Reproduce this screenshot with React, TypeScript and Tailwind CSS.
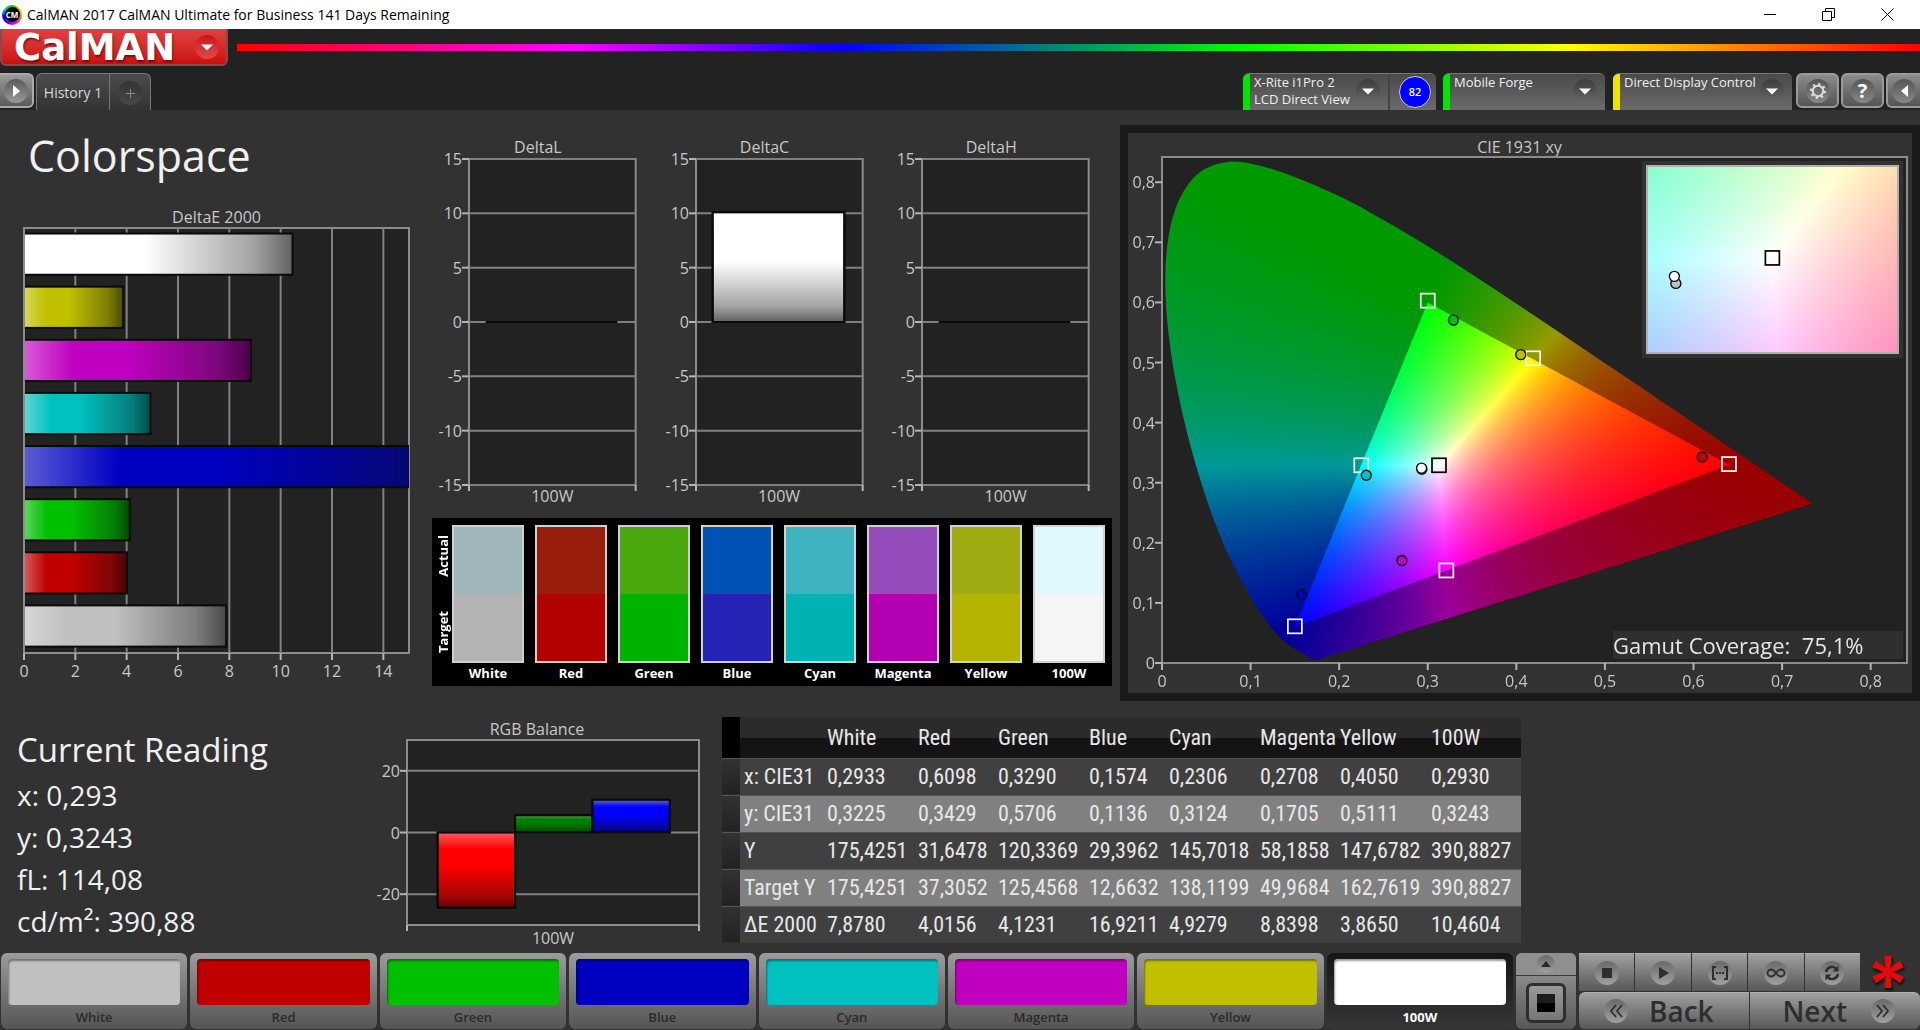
import { useLayoutEffect, useRef } from "react";
import type { ReactNode } from "react";

type Patch = {
  name: string;
  color: string;
  actual: string;
  target: string;
  deltaE: number;
};

const patches: Patch[] = [
  { name: "White", color: "#c0c0c0", actual: "#a2b5bb", target: "#b3b3b3", deltaE: 7.878 },
  { name: "Red", color: "#c00000", actual: "#9a1e0c", target: "#b30000", deltaE: 4.0156 },
  { name: "Green", color: "#00c000", actual: "#4ba90f", target: "#00b300", deltaE: 4.1231 },
  { name: "Blue", color: "#0000c0", actual: "#0053b4", target: "#2622b5", deltaE: 16.9211 },
  { name: "Cyan", color: "#00c0c0", actual: "#3eb3bf", target: "#00b3b3", deltaE: 4.9279 },
  { name: "Magenta", color: "#c000c0", actual: "#944dba", target: "#b300b3", deltaE: 8.8398 },
  { name: "Yellow", color: "#c0c000", actual: "#a0ab12", target: "#b3b300", deltaE: 3.865 },
  { name: "100W", color: "#ffffff", actual: "#dff9ff", target: "#f5f5f5", deltaE: 10.4604 },
];

const tableRows = [
  ["x: CIE31", "0,2933", "0,6098", "0,3290", "0,1574", "0,2306", "0,2708", "0,4050", "0,2930"],
  ["y: CIE31", "0,3225", "0,3429", "0,5706", "0,1136", "0,3124", "0,1705", "0,5111", "0,3243"],
  ["Y", "175,4251", "31,6478", "120,3369", "29,3962", "145,7018", "58,1858", "147,6782", "390,8827"],
  ["Target Y", "175,4251", "37,3052", "125,4568", "12,6632", "138,1199", "49,9684", "162,7619", "390,8827"],
  ["ΔE 2000", "7,8780", "4,0156", "4,1231", "16,9211", "4,9279", "8,8398", "3,8650", "10,4604"],
];

// Spectral locus, CIE 1931 2 degree observer
const locus = [
  [0.1741, 0.005], [0.1714, 0.0051], [0.1689, 0.0069], [0.1644, 0.0109], [0.1566, 0.0177],
  [0.144, 0.0297], [0.1355, 0.0399], [0.1241, 0.0578], [0.1096, 0.0868], [0.0913, 0.1327],
  [0.0687, 0.2007], [0.0454, 0.295], [0.0235, 0.4127], [0.0082, 0.5384], [0.0039, 0.6548],
  [0.0139, 0.7502], [0.0389, 0.812], [0.0743, 0.8338], [0.1142, 0.8262], [0.1547, 0.8059],
  [0.1929, 0.7816], [0.2296, 0.7543], [0.3016, 0.6923], [0.3731, 0.6245], [0.4441, 0.5547],
  [0.5125, 0.4866], [0.5752, 0.4242], [0.627, 0.3725], [0.6658, 0.334], [0.6915, 0.3083],
  [0.719, 0.2809], [0.7347, 0.2653],
];

const gamut = [[0.64, 0.33], [0.3, 0.6], [0.15, 0.06]];

const targets = [
  { x: 0.3, y: 0.603, stroke: "#fff" },
  { x: 0.419, y: 0.507, stroke: "#fff" },
  { x: 0.64, y: 0.331, stroke: "#fff" },
  { x: 0.225, y: 0.329, stroke: "#fff" },
  { x: 0.321, y: 0.154, stroke: "#fff" },
  { x: 0.15, y: 0.061, stroke: "#fff" },
  { x: 0.3127, y: 0.329, stroke: "#000" },
];

const readings = [
  { x: 0.2933, y: 0.3225, fill: "#c0c0c0" },
  { x: 0.6098, y: 0.3429, fill: "#c00000" },
  { x: 0.329, y: 0.5706, fill: "#00c000" },
  { x: 0.1574, y: 0.1136, fill: "#0000c0" },
  { x: 0.2306, y: 0.3124, fill: "#00c0c0" },
  { x: 0.2708, y: 0.1705, fill: "#c000c0" },
  { x: 0.405, y: 0.5131, fill: "#c0c000" },
  { x: 0.293, y: 0.3243, fill: "#fff" },
];

type Range = { x0: number; x1: number; y0: number; y1: number };

const fullRange: Range = { x0: 0, x1: 0.841, y0: 0, y1: 0.842 };
const insetRange: Range = { x0: 0.2877, x1: 0.3377, y0: 0.305, y1: 0.3522 };

function xyToRgb(x: number, y: number) {
  const X = x / y;
  const Z = (1 - x - y) / y;
  const rgb = [
    3.2406 * X - 1.5372 - 0.4986 * Z,
    -0.9689 * X + 1.8758 + 0.0415 * Z,
    0.0557 * X - 0.204 + 1.057 * Z,
  ].map((v) => Math.max(0, v));
  const max = Math.max(...rgb);
  return rgb.map((v) => (v / max) * 255);
}

function Chromaticity({ range, bounded }: { range: Range; bounded?: boolean }) {
  const ref = useRef<HTMLCanvasElement>(null);

  useLayoutEffect(() => {
    const canvas = ref.current;
    const ctx = canvas?.getContext("2d");
    if (!canvas || !ctx) return;
    const w = (canvas.width = canvas.clientWidth);
    const h = (canvas.height = canvas.clientHeight);
    const px = (x: number) => ((x - range.x0) / (range.x1 - range.x0)) * w;
    const py = (y: number) => ((range.y1 - y) / (range.y1 - range.y0)) * h;

    const layer = (gain: number) => {
      const off = document.createElement("canvas");
      off.width = w;
      off.height = h;
      const offCtx = off.getContext("2d")!;
      const img = offCtx.createImageData(w, h);
      for (let j = 0; j < h; j++) {
        const y = range.y1 - ((j + 0.5) / h) * (range.y1 - range.y0);
        for (let i = 0; i < w; i++) {
          const x = range.x0 + ((i + 0.5) / w) * (range.x1 - range.x0);
          const [r, g, b] = xyToRgb(x, y);
          img.data.set([r * gain, g * gain, b * gain, 255], (j * w + i) * 4);
        }
      }
      offCtx.putImageData(img, 0, 0);
      return off;
    };

    if (!bounded) {
      ctx.drawImage(layer(1), 0, 0);
      return;
    }

    ctx.save();
    ctx.beginPath();
    ctx.moveTo(px(locus[0][0]), py(locus[0][1]));
    for (let i = 0; i < locus.length - 1; i++) {
      const p0 = locus[Math.max(0, i - 1)];
      const p1 = locus[i];
      const p2 = locus[i + 1];
      const p3 = locus[Math.min(locus.length - 1, i + 2)];
      ctx.bezierCurveTo(
        px(p1[0] + (p2[0] - p0[0]) / 6),
        py(p1[1] + (p2[1] - p0[1]) / 6),
        px(p2[0] - (p3[0] - p1[0]) / 6),
        py(p2[1] - (p3[1] - p1[1]) / 6),
        px(p2[0]),
        py(p2[1])
      );
    }
    ctx.closePath();
    ctx.clip();
    ctx.drawImage(layer(0.6), 0, 0);
    ctx.restore();

    ctx.beginPath();
    gamut.forEach(([x, y]) => ctx.lineTo(px(x), py(y)));
    ctx.closePath();
    ctx.clip();
    ctx.drawImage(layer(1), 0, 0);
  }, [range, bounded]);

  return <canvas ref={ref} className="block h-full w-full" />;
}

function Markers({ range }: { range: Range }) {
  const left = (x: number) => `${((x - range.x0) / (range.x1 - range.x0)) * 100}%`;
  const top = (y: number) => `${((range.y1 - y) / (range.y1 - range.y0)) * 100}%`;
  const inside = (p: { x: number; y: number }) =>
    p.x > range.x0 && p.x < range.x1 && p.y > range.y0 && p.y < range.y1;
  return (
    <svg className="absolute inset-0 h-full w-full">
      {targets.filter(inside).map((t) => (
        <svg key={t.x} x={left(t.x)} y={top(t.y)} overflow="visible">
          <rect x="-7" y="-7" width="14" height="14" fill="none" stroke={t.stroke} strokeWidth="1.7" />
        </svg>
      ))}
      {readings.filter(inside).map((r) => (
        <circle key={r.x} cx={left(r.x)} cy={top(r.y)} r="5" fill={r.fill} stroke="#111" strokeWidth="1.4" />
      ))}
    </svg>
  );
}

function Defs() {
  return (
    <svg className="absolute h-0 w-0" aria-hidden="true">
      <defs>
        <linearGradient id="shade-x">
          <stop offset="0" stopColor="#fff" stopOpacity=".36" />
          <stop offset=".22" stopColor="#fff" stopOpacity="0" />
          <stop offset=".45" stopColor="#111" stopOpacity="0" />
          <stop offset=".85" stopColor="#111" stopOpacity=".38" />
          <stop offset="1" stopColor="#000" stopOpacity=".62" />
        </linearGradient>
        <linearGradient id="shade-y" x2="0" y2="1">
          <stop offset="0" stopColor="#fff" stopOpacity=".36" />
          <stop offset=".22" stopColor="#fff" stopOpacity="0" />
          <stop offset=".45" stopColor="#111" stopOpacity="0" />
          <stop offset=".85" stopColor="#111" stopOpacity=".38" />
          <stop offset="1" stopColor="#000" stopOpacity=".62" />
        </linearGradient>
      </defs>
    </svg>
  );
}

function DeltaEChart() {
  const max = 15;
  const bars = [...patches].reverse();
  return (
    <section>
      <h2 className="text-center text-[16px] leading-5 text-[#c8c8c8]">DeltaE 2000</h2>
      <svg className="mt-px block h-[425px] w-full overflow-visible">
        <rect width="100%" height="100%" fill="#222" stroke="#8c8c8c" strokeWidth="2" />
        {[0, 2, 4, 6, 8, 10, 12, 14].map((t) => (
          <g key={t}>
            <line x1={`${(t / max) * 100}%`} x2={`${(t / max) * 100}%`} y2="100%" stroke="#808080" strokeWidth="2" />
            <svg x={`${(t / max) * 100}%`} y="100%" overflow="visible">
              <line y2="7" stroke="#b4b4b4" strokeWidth="2" />
              <text y="24" textAnchor="middle" className="fill-[#c8c8c8] text-[16px]">
                {t}
              </text>
            </svg>
          </g>
        ))}
        <svg width="100%" height="100%">
          {bars.map((b, i) => (
            <g key={b.name}>
              <rect
                y={`${i * 12.5 + 1.3}%`} height="9.7%" width={`${(b.deltaE / max) * 100}%`}
                fill={b.color}
              />
              <rect
                y={`${i * 12.5 + 1.3}%`} height="9.7%" width={`${(b.deltaE / max) * 100}%`}
                fill="url(#shade-x)" stroke="#0a0a0a" strokeWidth="2"
              />
            </g>
          ))}
        </svg>
        <line y2="100%" stroke="#8c8c8c" strokeWidth="2" />
      </svg>
      <div className="h-[30px]" />
    </section>
  );
}

type Bar = { x: number; width: number; value: number; color: string };

function ColumnChart({
  ticks,
  limit,
  bars,
  plotClass,
}: {
  ticks: number[];
  limit: number;
  bars: Bar[];
  plotClass: string;
}) {
  const at = (v: number) => `${((limit - v) / (2 * limit)) * 100}%`;
  return (
    <svg className={plotClass}>
      <rect width="100%" height="100%" fill="#222" stroke="#8c8c8c" strokeWidth="2" />
      {ticks.map((t) => (
        <g key={t}>
          <line x2="100%" y1={at(t)} y2={at(t)} stroke="#808080" strokeWidth="2" />
          <line x1="-7" y1={at(t)} y2={at(t)} stroke="#b4b4b4" strokeWidth="2" />
          <text x="-7" y={at(t)} dy="6" textAnchor="end" className="fill-[#c8c8c8] text-[16px]">
            {t}
          </text>
        </g>
      ))}
      {bars.map((b) => (
        <g key={b.x} stroke="#0a0a0a" strokeWidth="2">
          <rect
            x={`${b.x}%`} width={`${b.width}%`} y={at(Math.max(0, b.value))}
            height={`${(Math.abs(b.value) / (2 * limit)) * 100}%`} fill={b.color}
          />
          <rect
            x={`${b.x}%`} width={`${b.width}%`} y={at(Math.max(0, b.value))}
            height={`${(Math.abs(b.value) / (2 * limit)) * 100}%`} fill="url(#shade-y)"
          />
          {b.value === 0 && <line x1={`${b.x}%`} x2={`${b.x + b.width}%`} y1="50%" y2="50%" />}
        </g>
      ))}
      <svg y="100%" overflow="visible">
        <line y2="6" stroke="#b4b4b4" strokeWidth="2" />
      </svg>
      <svg x="100%" y="100%" overflow="visible">
        <line y2="6" stroke="#b4b4b4" strokeWidth="2" />
      </svg>
    </svg>
  );
}

function DeltaChart({ title, value }: { title: string; value: number }) {
  return (
    <section className="flex-1 pr-[23px]">
      <h2 className="pl-2 text-center text-[16px] leading-5 text-[#c8c8c8]">{title}</h2>
      <div className="pl-[37px]">
        <ColumnChart
          ticks={[15, 10, 5, 0, -5, -10, -15]}
          limit={15}
          bars={[{ x: 10, width: 79, value, color: "#fff" }]}
          plotClass="mt-0.5 block h-[326px] w-full overflow-visible"
        />
        <p className="pt-px text-center text-[16px] leading-5 text-[#c8c8c8]">100W</p>
      </div>
    </section>
  );
}

function SwatchPanel() {
  return (
    <section className="mt-3 flex bg-black pt-[7px] pr-[7px] pb-[3px] pl-[3px] font-bold text-white">
      <div className="flex h-[138px] w-[17px] flex-col justify-between py-2.5 text-[13px] leading-4">
        <span className="rotate-180 text-center [writing-mode:vertical-rl]">Actual</span>
        <span className="rotate-180 text-center [writing-mode:vertical-rl]">Target</span>
      </div>
      <div className="grid flex-1 grid-cols-8 gap-[11px]">
        {patches.map((p) => (
          <figure key={p.name} className="min-w-0">
            <div className="flex h-[138px] flex-col border-2 border-[#d0d0d0]">
              <div className="flex-1" style={{ background: p.actual }} />
              <div className="flex-1" style={{ background: p.target }} />
            </div>
            <figcaption className="text-center text-[13px] leading-5">{p.name}</figcaption>
          </figure>
        ))}
      </div>
    </section>
  );
}

function CiePanel() {
  return (
    <section className="mt-[15px] ml-2 border-8 border-[#1a1a1a] bg-[#323232] pt-1 pr-[5px] pl-[34px]">
      <h2 className="pr-[30px] text-center text-[16px] leading-5 text-[#c8c8c8]">CIE 1931 xy</h2>
      <div className="relative h-[506px] bg-[#222]">
        <Chromaticity range={fullRange} bounded />
        <svg className="absolute inset-0 h-full w-full overflow-visible">
          <rect width="100%" height="100%" fill="none" stroke="#8c8c8c" strokeWidth="2" />
          {["0", "0,1", "0,2", "0,3", "0,4", "0,5", "0,6", "0,7", "0,8"].map((t, i) => (
            <g key={t}>
              <svg x={`${(i / 8.41) * 100}%`} y="100%" overflow="visible">
                <line y2="7" stroke="#b4b4b4" strokeWidth="2" />
                <text y="24" textAnchor="middle" className="fill-[#c8c8c8] text-[16px]">
                  {t}
                </text>
              </svg>
              <svg y={`${(1 - i / 8.42) * 100}%`} overflow="visible">
                <line x1="-7" stroke="#b4b4b4" strokeWidth="2" />
                <text x="-7" y="6" textAnchor="end" className="fill-[#c8c8c8] text-[16px]">
                  {t}
                </text>
              </svg>
            </g>
          ))}
        </svg>
        <Markers range={fullRange} />
        <div className="absolute top-1 right-1 h-[197px] w-[35%] border-4 border-[#323232]">
          <div className="relative h-full border-2 border-[#b0b0b0]">
            <Chromaticity range={insetRange} />
            <Markers range={insetRange} />
          </div>
        </div>
        <p className="absolute right-1 bottom-1 w-[290px] bg-[#2f2f2f] text-[22px] leading-7 whitespace-pre text-[#e6e6e6]">
          Gamut Coverage:{"  "}75,1%
        </p>
      </div>
      <div className="h-[30px]" />
    </section>
  );
}

function CurrentReading() {
  return (
    <section className="pt-[29px] pl-[17px] text-[#f0f0f0]">
      <h2 className="text-[33px] leading-10">Current Reading</h2>
      <div className="mt-1 text-[28px] leading-[42px]">
        <p>x: 0,293</p>
        <p>y: 0,3243</p>
        <p>fL: 114,08</p>
        <p>cd/m²: 390,88</p>
      </div>
    </section>
  );
}

function ReadingsTable() {
  return (
    <table className="mt-4 w-2/3 table-fixed border-collapse text-left font-['Roboto_Condensed','Open_Sans',sans-serif] text-[22px] text-[#e8e8e8]">
      <thead>
        <tr className="h-[41px] bg-linear-to-b from-[#2b2b2b] from-50% to-[#141414] to-50%">
          <th className="w-[18px] bg-black" />
          <th className="w-[83px]" />
          {patches.map((p, i) => (
            <th
              key={p.name}
              className={`${i === patches.length - 1 ? "w-auto" : i % 2 ? "w-[80px]" : "w-[91px]"} pl-1 font-normal`}
            >
              {p.name}
            </th>
          ))}
        </tr>
      </thead>
      <tbody>
        {tableRows.map((row) => (
          <tr key={row[0]} className="h-[37px] border-t border-[#555] bg-[#404040] even:bg-[#808080]">
            <td className="bg-linear-to-b from-[#323232] to-[#222]" />
            {row.map((cell, i) => (
              <td key={i} className="pl-1 whitespace-nowrap">
                {cell}
              </td>
            ))}
          </tr>
        ))}
      </tbody>
    </table>
  );
}

function RoundIcon({ children, className = "" }: { children?: ReactNode; className?: string }) {
  return (
    <span className={`grid shrink-0 place-items-center rounded-full ${className}`}>
      {children}
    </span>
  );
}

function DownArrow() {
  return (
    <svg width="12" height="8" viewBox="0 0 12 8" fill="#fff">
      <path d="M0 1.500h12L6 7.500z" />
    </svg>
  );
}

function DeviceMenu({ lines, accent, className, children }: {
  lines: string[];
  accent: string;
  className: string;
  children?: ReactNode;
}) {
  return (
    <div className={`flex h-[37px] overflow-hidden rounded-t-md border-t border-[#777] bg-linear-to-b from-[#4a4a4a] to-[#6b6b6b] ${className}`}>
      <span className={`w-[7px] shrink-0 ${accent}`} />
      <button type="button" className="flex min-w-0 flex-1 items-start pl-1 text-left">
        <span className="flex-1 text-[13px] leading-[17px] whitespace-nowrap text-[#f0f0f0]">
          {lines.map((l) => (
            <span key={l} className="block">
              {l}
            </span>
          ))}
        </span>
        <RoundIcon className="mt-[5px] mr-2 h-6 w-6 bg-linear-to-b from-[#3c3c3c] to-[#686868]">
          <DownArrow />
        </RoundIcon>
      </button>
      {children}
    </div>
  );
}

const toolButton =
  "grid h-[35px] w-[43px] place-items-center rounded-md border-2 border-[#9a9a9a] bg-linear-to-b from-[#8c8c8c] to-[#555]";

function Header() {
  return (
    <header className="bg-[#222]">
      <div className="flex items-start">
        <button
          type="button"
          aria-label="CalMAN menu"
          className="flex h-[37px] w-[228px] items-center rounded-b-md border-2 border-t-0 border-[#8a4a4a] bg-linear-to-b from-[#e04040] to-[#cc0d0d] pl-3"
        >
          <span className="pt-0.5 font-['DejaVu_Sans','Open_Sans',sans-serif] text-[37px] leading-[34px] font-bold text-white [text-shadow:1px_2px_2px_#0007]">CalMAN</span>
          <RoundIcon className="mr-[7px] ml-auto h-6 w-6 bg-linear-to-b from-[#c8101c] to-[#e04848]">
            <DownArrow />
          </RoundIcon>
        </button>
        <div className="mt-[15px] ml-[9px] h-[7px] flex-1 bg-[linear-gradient(90deg,#f00,#f0f_20%,#00f_36%,#0f0_60%,#ff0_79%,#f00)]" />
      </div>
      <div className="flex items-start pt-[7px]">
        <button
          type="button"
          aria-label="Expand left panel"
          className="grid h-[35px] w-[34px] place-items-center rounded-r-md border-2 border-l-0 border-[#aaa] bg-linear-to-b from-[#999] to-[#5c5c5c]"
        >
          <RoundIcon className="h-6 w-6 bg-linear-to-b from-[#5a5a5a] to-[#9a9a9a]">
            <svg width="7" height="12" viewBox="0 0 7 12" fill="#fff"><path d="M0 0l7 6-7 6z" /></svg>
          </RoundIcon>
        </button>
        <div className="ml-[2px] flex h-[37px] rounded-t-md border border-b-0 border-[#777] bg-linear-to-b from-[#4c4c4c] to-[#333]">
          <button type="button" className="w-[73px] border-r border-[#777] text-[14px] text-[#d8d8d8]">
            History 1
          </button>
          <button type="button" aria-label="Add tab" className="grid w-10 place-items-center pt-0.5">
            <RoundIcon className="h-6 w-6 bg-linear-to-b from-[#333] to-[#484848]">
              <svg width="9" height="9" viewBox="0 0 9 9" stroke="#888"><path d="M4.500 0v9M0 4.500h9" /></svg>
            </RoundIcon>
          </button>
        </div>
        <div className="ml-auto flex items-start">
          <DeviceMenu lines={["X-Rite i1Pro 2", "LCD Direct View"]} accent="bg-[#00e600]" className="w-[193px]">
            <div className="grid w-[48px] place-items-center border-l-2 border-[#444] pl-1">
              <span className="grid h-8 w-8 place-items-center rounded-full border border-[#ccd] bg-[#00f] text-[11px] font-semibold text-white">
                82
              </span>
            </div>
          </DeviceMenu>
          <DeviceMenu lines={["Mobile Forge"]} accent="bg-[#00e600]" className="ml-[7px] w-[162px]" />
          <DeviceMenu lines={["Direct Display Control"]} accent="bg-[#f0e400]" className="ml-2 w-[179px]" />
          <button type="button" aria-label="Settings" className={`${toolButton} ml-1`}>
            <RoundIcon className="h-6 w-6 bg-linear-to-b from-[#555] to-[#888]">
              <svg width="20" height="20" viewBox="0 0 20 20" fill="none" stroke="#ddd">
                <circle cx="10" cy="10" r="5.2" strokeWidth="2" />
                <circle cx="10" cy="10" r="7" strokeWidth="2.200" strokeDasharray="2.2 3.298" />
              </svg>
            </RoundIcon>
          </button>
          <button type="button" aria-label="Help" className={`${toolButton} ml-0.5`}>
            <RoundIcon className="h-6 w-6 bg-linear-to-b from-[#555] to-[#888] text-[20px] leading-6 font-bold text-white">?</RoundIcon>
          </button>
          <button
            type="button"
            aria-label="Expand right panel"
            className="ml-0.5 grid h-[35px] w-[34px] place-items-center rounded-l-md border-2 border-r-0 border-[#9a9a9a] bg-linear-to-b from-[#8c8c8c] to-[#555]"
          >
            <RoundIcon className="h-6 w-6 bg-linear-to-b from-[#555] to-[#888]">
              <svg width="7" height="12" viewBox="0 0 7 12" fill="#fff"><path d="M7 0L0 6l7 6z" /></svg>
            </RoundIcon>
          </button>
        </div>
      </div>
    </header>
  );
}

function TitleBar() {
  return (
    <div className="flex h-[29px] items-center bg-white pl-[2px] text-black">
      <span className="grid h-5 w-5 place-items-center rounded-full bg-[conic-gradient(#0c0,#cc0,#f80,#f0f,#60f,#00f,#0cc,#0c0)]">
        <span className="grid h-[15px] w-[15px] place-items-center rounded-full bg-black text-[8px] font-bold text-white">CM</span>
      </span>
      <span className="ml-[5px] text-[14px]">CalMAN 2017 CalMAN Ultimate for Business 141 Days Remaining</span>
      <div className="ml-auto flex pr-[3px]">
        <button type="button" aria-label="Minimize" className="grid w-[58px] place-items-center">
          <svg width="12" height="12" stroke="#000"><path d="M0 5.5h12" /></svg>
        </button>
        <button type="button" aria-label="Restore" className="grid w-[58px] place-items-center">
          <svg width="13" height="13" fill="none" stroke="#000"><path d="M.5 3.500h9v9h-9zM3.500 3v-2.500h9v9H10" /></svg>
        </button>
        <button type="button" aria-label="Close" className="grid w-[60px] place-items-center">
          <svg width="13" height="13" stroke="#000"><path d="M.5 .5l12 12M12.500 .5l-12 12" /></svg>
        </button>
      </div>
    </div>
  );
}

function PatchButton({ patch, selected }: { patch: Patch; selected?: boolean }) {
  return (
    <button
      type="button"
      className={`flex h-[76px] min-w-0 flex-1 flex-col rounded-md px-[7px] pt-[6px] text-[13px] leading-[24px] ${
        selected
          ? "bg-linear-to-b from-[#161616] to-[#363636] font-bold text-white"
          : "bg-linear-to-b from-[#9c9c9c] to-[#555] font-semibold text-[#2a2a2a]"
      }`}
    >
      <span
        className="block h-[46px] w-full rounded shadow-[inset_1px_2px_2px_#0006]"
        style={{ background: patch.color }}
      />
      <span className="block w-full text-center">{patch.name}</span>
    </button>
  );
}

const steel = "bg-linear-to-b from-[#a0a0a0] to-[#585858]";
const dimple = "bg-linear-to-b from-[#6a6a6a] to-[#a0a0a0]";

const transport = [
  { label: "Stop", icon: <rect x="7" y="7" width="10" height="10" fill="#2e2e2e" /> },
  { label: "Play", icon: <path d="M8 6l10 6-10 6z" fill="#2e2e2e" /> },
  {
    label: "Read series",
    icon: (
      <g fill="none" stroke="#2e2e2e" strokeWidth="2">
        <path d="M8 6H5v12h3M16 6h3v12h-3" />
        <path d="M8 12h8" strokeDasharray="2 1" />
      </g>
    ),
  },
  {
    label: "Read continuous",
    icon: (
      <path
        d="M12 12c-2-3-3.500-3.500-5-3.500a3.500 3.500 0 000 7c1.500 0 3-.5 5-3.500s3.500-3.500 5-3.500a3.500 3.500 0 010 7c-1.500 0-3-.5-5-3.500z"
        fill="none" stroke="#2e2e2e" strokeWidth="1.8"
      />
    ),
  },
  {
    label: "Refresh",
    icon: (
      <g>
        <path d="M6 11a6 6 0 0110-3.500M18 13a6 6 0 01-10 3.500" fill="none" stroke="#2e2e2e" strokeWidth="2.400" />
        <path d="M18.500 4.500v6h-6zM5.500 19.500v-6h6z" fill="#2e2e2e" />
      </g>
    ),
  },
];

function Footer() {
  return (
    <footer className="mt-[5px] flex items-start gap-[3px] pl-px">
      <div className="flex min-w-0 flex-1 gap-[3px]">
        {patches.map((p) => (
          <PatchButton key={p.name} patch={p} selected={p.name === "100W"} />
        ))}
      </div>
      <div className={`flex h-[76px] w-[60px] flex-col items-center overflow-hidden rounded-md ${steel}`}>
        <button type="button" aria-label="Show more" className="grid h-[23px] w-full place-items-center border-b border-[#3c3c3c] bg-[#8f8f8f]">
          <RoundIcon className={`h-[18px] w-[18px] ${dimple}`}>
            <svg width="10" height="6" fill="#2a2a2a"><path d="M0 6l5-6 5 6z" /></svg>
          </RoundIcon>
        </button>
        <button type="button" aria-label="Pattern window" className="mt-[7px] grid h-10 w-10 place-items-center rounded-md border-3 border-[#2e2e2e] bg-linear-to-b from-[#9a9a9a] to-[#777]">
          <span className="h-[18px] w-[18px] bg-linear-to-b from-[#1c1c1c] from-50% to-black to-50%" />
        </button>
      </div>
      <div className="w-[341px]">
        <div className="flex items-center">
          <div className="flex flex-1 gap-px">
            {transport.map((t) => (
              <button key={t.label} type="button" aria-label={t.label} className={`grid h-[38px] flex-1 place-items-center border-t border-[#b0b0b0] ${steel}`}>
                <RoundIcon className={`h-6 w-6 ${dimple}`}>
                  <svg width="24" height="24" viewBox="0 0 24 24">{t.icon}</svg>
                </RoundIcon>
              </button>
            ))}
          </div>
          <div className="grid w-[60px] place-items-center pr-1">
            <svg width="36" height="36" viewBox="-18 -18 36 36" className="drop-shadow-[1px_2px_1px_#000]">
              {[0, 60, 120, 180, 240, 300].map((a) => (
                <path key={a} d="M-1.500 0L-3.200 -15.500h6.400L1.500 0z" fill="#e60a0a" stroke="#e60a0a" transform={`rotate(${a})`} />
              ))}
            </svg>
          </div>
        </div>
        <div className="flex gap-px pt-px text-[28px] leading-9 font-semibold text-[#2e2e2e]">
          <button type="button" className={`flex h-[37px] flex-1 items-center rounded-l-md border-t border-[#b0b0b0] pl-[25px] ${steel}`}>
            <RoundIcon className={`mr-[21px] h-6 w-6 ${dimple}`}>
              <svg width="14" height="14" viewBox="0 0 14 14" fill="none" stroke="#2e2e2e" strokeWidth="1.8"><path d="M7 1L2 7l5 6M13 1L8 7l5 6" /></svg>
            </RoundIcon>
            Back
          </button>
          <button type="button" className={`flex h-[37px] flex-1 items-center justify-end rounded-r-md border-t border-[#b0b0b0] pr-[25px] ${steel}`}>
            Next
            <RoundIcon className={`ml-[24px] h-6 w-6 ${dimple}`}>
              <svg width="14" height="14" viewBox="0 0 14 14" fill="none" stroke="#2e2e2e" strokeWidth="1.8"><path d="M1 1l5 6-5 6M7 1l5 6-5 6" /></svg>
            </RoundIcon>
          </button>
        </div>
      </div>
    </footer>
  );
}

export default function App() {
  return (
    <div className="min-h-screen bg-[#323232] font-['Open_Sans','Noto_Sans',sans-serif]">
      <Defs />
      <TitleBar />
      <Header />
      <main>
        <div className="grid grid-cols-[410fr_702fr_808fr] items-start">
          <div className="pt-[22px] pr-px pl-6">
            <h1 className="pl-1 text-[43px] leading-[48px] text-[#f0f0f0]">Colorspace</h1>
            <div className="mt-[27px]">
              <DeltaEChart />
            </div>
          </div>
          <div className="pt-[27px] pl-[22px]">
            <div className="flex">
              <DeltaChart title="DeltaL" value={0} />
              <DeltaChart title="DeltaC" value={10.1} />
              <DeltaChart title="DeltaH" value={0} />
            </div>
            <SwatchPanel />
          </div>
          <CiePanel />
        </div>
        <div className="grid grid-cols-[375fr_347fr_1198fr] items-start">
          <CurrentReading />
          <section className="pt-[18px] pr-[23px]">
            <h2 className="text-center text-[16px] leading-5 text-[#c8c8c8]">RGB Balance</h2>
            <div className="pl-8">
              <ColumnChart
                ticks={[20, 0, -20]}
                limit={30}
                bars={[
                  { x: 10.5, width: 26.5, value: -24.4, color: "#f00" },
                  { x: 37, width: 26.5, value: 5.6, color: "#008000" },
                  { x: 63.5, width: 26.5, value: 10.6, color: "#00f" },
                ]}
                plotClass="mt-px block h-[185px] w-full overflow-visible"
              />
              <p className="mt-[3px] text-center text-[16px] leading-5 text-[#c8c8c8]">100W</p>
            </div>
          </section>
          <ReadingsTable />
        </div>
      </main>
      <Footer />
    </div>
  );
}
